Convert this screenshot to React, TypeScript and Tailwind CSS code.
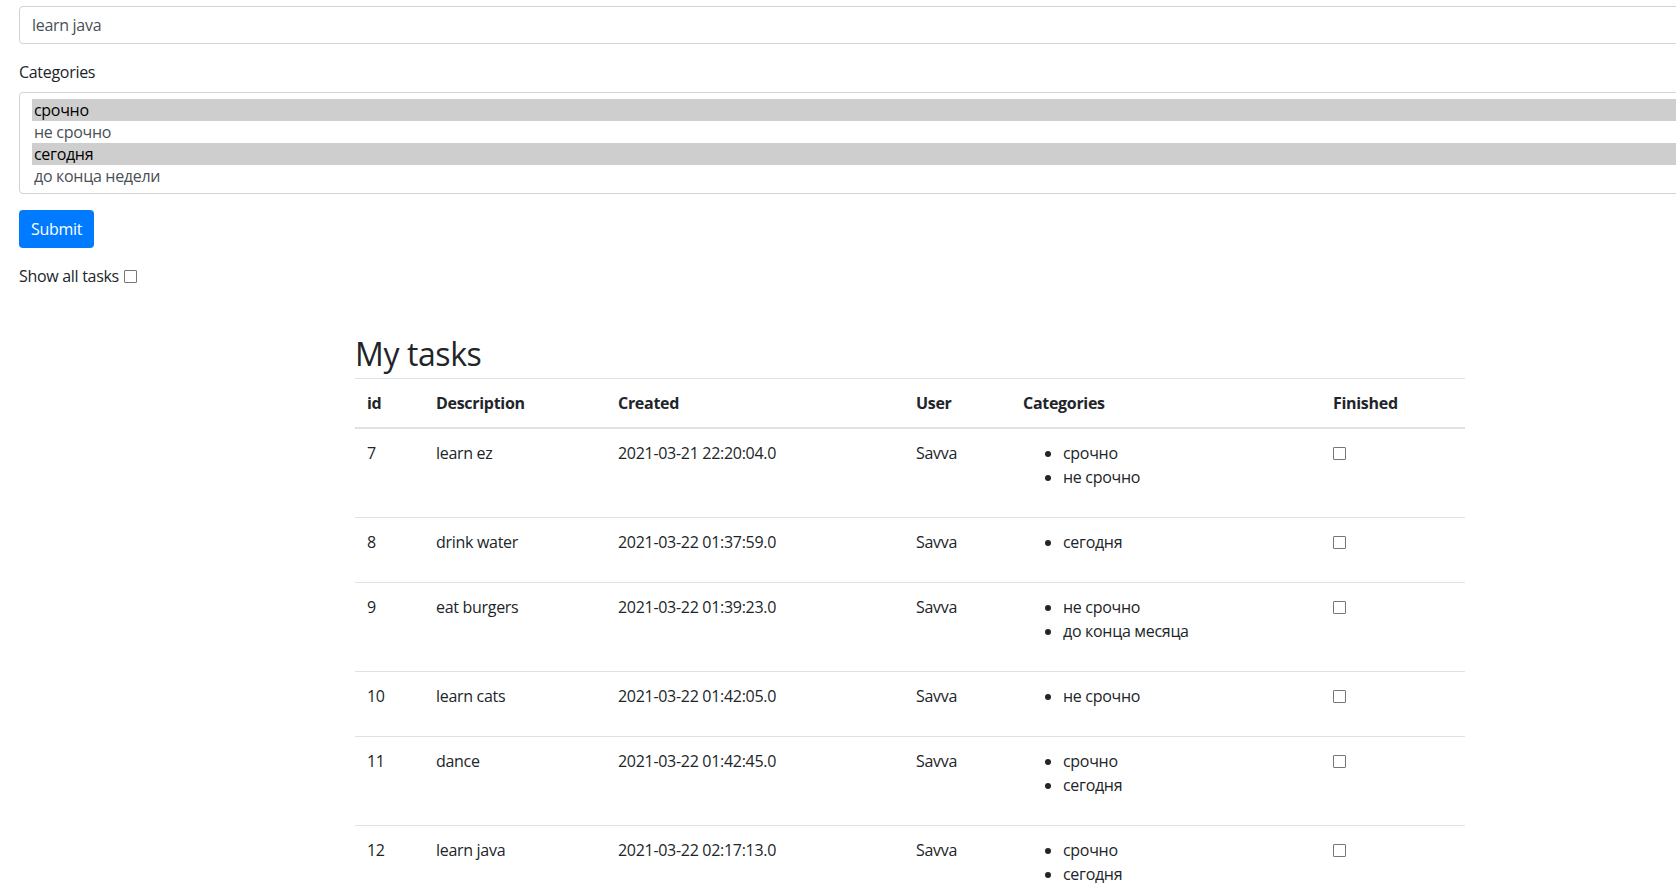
import React from "react";

type Task = {
  id: number;
  description: string;
  created: string;
  user: string;
  categories: string[];
};

const tasks: Task[] = [
  { id: 7, description: "learn ez", created: "2021-03-21 22:20:04.0", user: "Savva", categories: ["срочно", "не срочно"] },
  { id: 8, description: "drink water", created: "2021-03-22 01:37:59.0", user: "Savva", categories: ["сегодня"] },
  { id: 9, description: "eat burgers", created: "2021-03-22 01:39:23.0", user: "Savva", categories: ["не срочно", "до конца месяца"] },
  { id: 10, description: "learn cats", created: "2021-03-22 01:42:05.0", user: "Savva", categories: ["не срочно"] },
  { id: 11, description: "dance", created: "2021-03-22 01:42:45.0", user: "Savva", categories: ["срочно", "сегодня"] },
  { id: 12, description: "learn java", created: "2021-03-22 02:17:13.0", user: "Savva", categories: ["срочно", "сегодня"] },
];

const options = [
  { label: "срочно", selected: true },
  { label: "не срочно", selected: false },
  { label: "сегодня", selected: true },
  { label: "до конца недели", selected: false },
];

function Checkbox() {
  return (
    <input
      type="checkbox"
      className="appearance-none m-0 block w-[13px] h-[13px] border border-[#767676] rounded-[1px] bg-white"
    />
  );
}

export default function App() {
  return (
    <div className="w-full h-screen overflow-hidden bg-white text-[#212529] text-base leading-6 tracking-[-0.3px] font-['Open_Sans','Noto_Sans',sans-serif]">
      <div className="w-[1820px]">
        {/* Form */}
        <form className="pt-[6px] px-[19px]">
          <div className="mb-4">
            <div className="h-[38px] flex items-center px-3 border border-[#ced4da] rounded-[4px] text-[#495057]">
              learn java
            </div>
          </div>

          <div className="mb-4">
            <label className="block mb-2">Categories</label>
            <div className="border border-[#ced4da] rounded-[4px] pt-[6px] pb-[6px] px-3">
              {options.map((o) => (
                <div
                  key={o.label}
                  className={
                    o.selected
                      ? "h-[22px] leading-[22px] px-[2px] bg-[#cecece] text-black"
                      : "h-[22px] leading-[22px] px-[2px] text-[#495057]"
                  }
                >
                  {o.label}
                </div>
              ))}
            </div>
          </div>

          <button
            type="button"
            className="h-[38px] px-3 rounded-[4px] bg-[#007bff] text-white"
          >
            Submit
          </button>

          <div className="mt-4 flex items-center gap-[5px]">
            <span>Show all tasks</span>
            <Checkbox />
          </div>
        </form>

        {/* Tasks */}
        <div className="w-[1140px] mx-auto px-[15px] mt-[44px]">
          <h2 className="text-[32px] leading-[1.2] font-medium tracking-[-0.4px] pt-[3px] mb-[5px]">My tasks</h2>
          <table className="w-full table-fixed border-collapse">
            <thead>
              <tr className="text-left">
                <th className="w-[69px] p-3 font-bold border-t border-b-2 border-[#dee2e6]">id</th>
                <th className="w-[182px] p-3 font-bold border-t border-b-2 border-[#dee2e6]">Description</th>
                <th className="w-[298px] p-3 font-bold border-t border-b-2 border-[#dee2e6]">Created</th>
                <th className="w-[107px] p-3 font-bold border-t border-b-2 border-[#dee2e6]">User</th>
                <th className="w-[310px] p-3 font-bold border-t border-b-2 border-[#dee2e6]">Categories</th>
                <th className="p-3 font-bold border-t border-b-2 border-[#dee2e6]">Finished</th>
              </tr>
            </thead>
            <tbody>
              {tasks.map((t) => (
                <tr key={t.id}>
                  <td className="p-3 align-top border-t border-[#dee2e6]">{t.id}</td>
                  <td className="p-3 align-top border-t border-[#dee2e6]">{t.description}</td>
                  <td className="p-3 align-top border-t border-[#dee2e6]">{t.created}</td>
                  <td className="p-3 align-top border-t border-[#dee2e6]">{t.user}</td>
                  <td className="p-3 align-top border-t border-[#dee2e6]">
                    <ul className="list-disc pl-10 mb-4">
                      {t.categories.map((c) => (
                        <li key={c}>{c}</li>
                      ))}
                    </ul>
                  </td>
                  <td className="p-3 align-top border-t border-[#dee2e6]">
                    <div className="pt-[6px]">
                      <Checkbox />
                    </div>
                  </td>
                </tr>
              ))}
            </tbody>
          </table>
        </div>
      </div>
    </div>
  );
}
